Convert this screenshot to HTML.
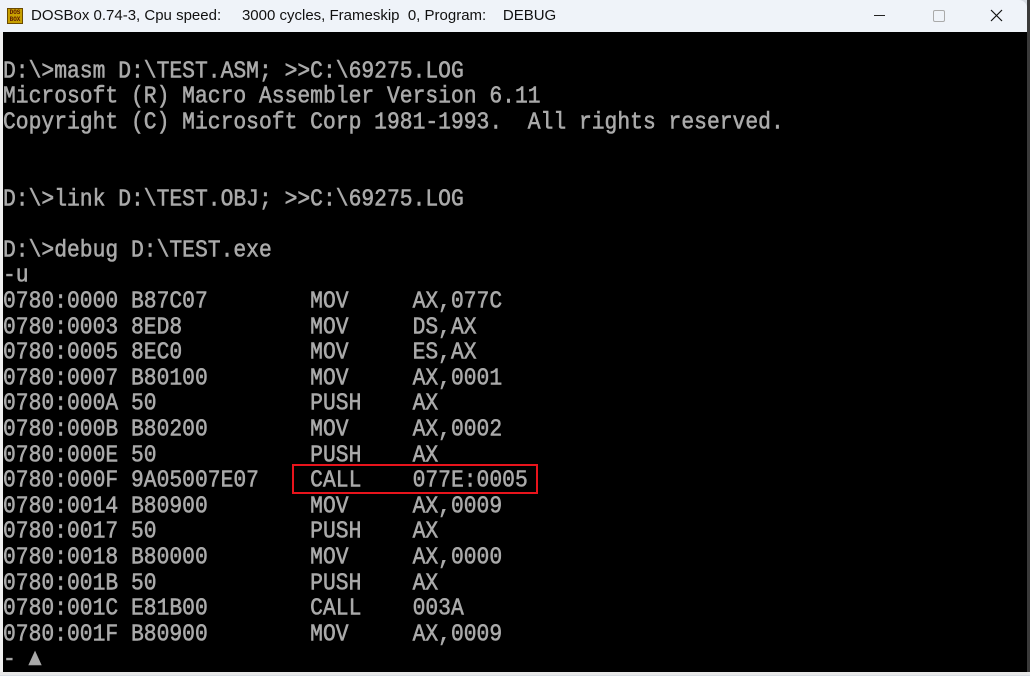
<!DOCTYPE html>
<html><head><meta charset="utf-8"><style>
html,body{margin:0;padding:0;width:1030px;height:675px;overflow:hidden;background:#d8dde4;}
#title{position:absolute;left:0;top:0;width:1027px;height:32px;background:#eff3f9;font-family:"Liberation Sans",sans-serif;font-size:15px;color:#111;border-top-right-radius:8px;}
#title .t{position:absolute;left:31px;top:7px;white-space:pre;}
#icon{position:absolute;left:7px;top:8px;width:16px;height:16px;background:#c8a000;border:1px solid #6b4a00;box-sizing:border-box;font:bold 6px "Liberation Mono",monospace;color:#5a1a00;line-height:7px;text-align:center;}
#screen{position:absolute;left:3px;top:32px;width:1024px;height:640px;background:#000;}
#left{position:absolute;left:0;top:32px;width:3px;height:643px;background:#f0f0f0;}
#right{position:absolute;left:1027px;top:0;width:3px;height:675px;background:#3a3a3a;}
#bottom{position:absolute;left:0;top:672px;width:1030px;height:3px;background:#e8e8e8;}
.row{position:absolute;left:3px;height:25.6px;line-height:25.6px;font-family:"Liberation Mono",monospace;font-size:21.33px;color:#aaaaaa;white-space:pre;transform:translateY(2px) scaleY(1.14);transform-origin:0 50%;-webkit-text-stroke:0.5px #aaaaaa;}
#box{position:absolute;left:292px;top:464px;width:246px;height:30px;border:2px solid #e8141c;box-sizing:border-box;}
</style></head><body>
<div id="left"></div><div id="right"></div><div id="bottom"></div>
<div id="title"><div id="icon">DOS<br>BOX</div><div class="t">DOSBox 0.74-3, Cpu speed:     3000 cycles, Frameskip  0, Program:    DEBUG</div>
<div style="position:absolute;left:874px;top:15px;width:11px;height:1px;background:#222"></div>
<div style="position:absolute;left:933px;top:10px;width:10px;height:10px;border:1px solid #aaa;border-radius:2px"></div>
<svg style="position:absolute;left:990px;top:9px" width="13" height="13"><path d="M1 1L12 12M12 1L1 12" stroke="#111" stroke-width="1.2"/></svg>
</div>
<div id="screen"></div>
<div class="row" style="top:57.6px">D:\>masm D:\TEST.ASM; >>C:\69275.LOG</div>
<div class="row" style="top:83.2px">Microsoft (R) Macro Assembler Version 6.11</div>
<div class="row" style="top:108.8px">Copyright (C) Microsoft Corp 1981-1993.  All rights reserved.</div>
<div class="row" style="top:185.6px">D:\>link D:\TEST.OBJ; >>C:\69275.LOG</div>
<div class="row" style="top:236.8px">D:\>debug D:\TEST.exe</div>
<div class="row" style="top:262.4px">-u</div>
<div class="row" style="top:288px">0780:0000 B87C07        MOV     AX,077C</div>
<div class="row" style="top:313.6px">0780:0003 8ED8          MOV     DS,AX</div>
<div class="row" style="top:339.2px">0780:0005 8EC0          MOV     ES,AX</div>
<div class="row" style="top:364.8px">0780:0007 B80100        MOV     AX,0001</div>
<div class="row" style="top:390.4px">0780:000A 50            PUSH    AX</div>
<div class="row" style="top:416px">0780:000B B80200        MOV     AX,0002</div>
<div class="row" style="top:441.6px">0780:000E 50            PUSH    AX</div>
<div class="row" style="top:467.2px">0780:000F 9A05007E07    CALL    077E:0005</div>
<div class="row" style="top:492.8px">0780:0014 B80900        MOV     AX,0009</div>
<div class="row" style="top:518.4px">0780:0017 50            PUSH    AX</div>
<div class="row" style="top:544px">0780:0018 B80000        MOV     AX,0000</div>
<div class="row" style="top:569.6px">0780:001B 50            PUSH    AX</div>
<div class="row" style="top:595.2px">0780:001C E81B00        CALL    003A</div>
<div class="row" style="top:620.8px">0780:001F B80900        MOV     AX,0009</div>
<div class="row" style="top:646.4px">- ▲</div>
<div id="box"></div>
</body></html>
